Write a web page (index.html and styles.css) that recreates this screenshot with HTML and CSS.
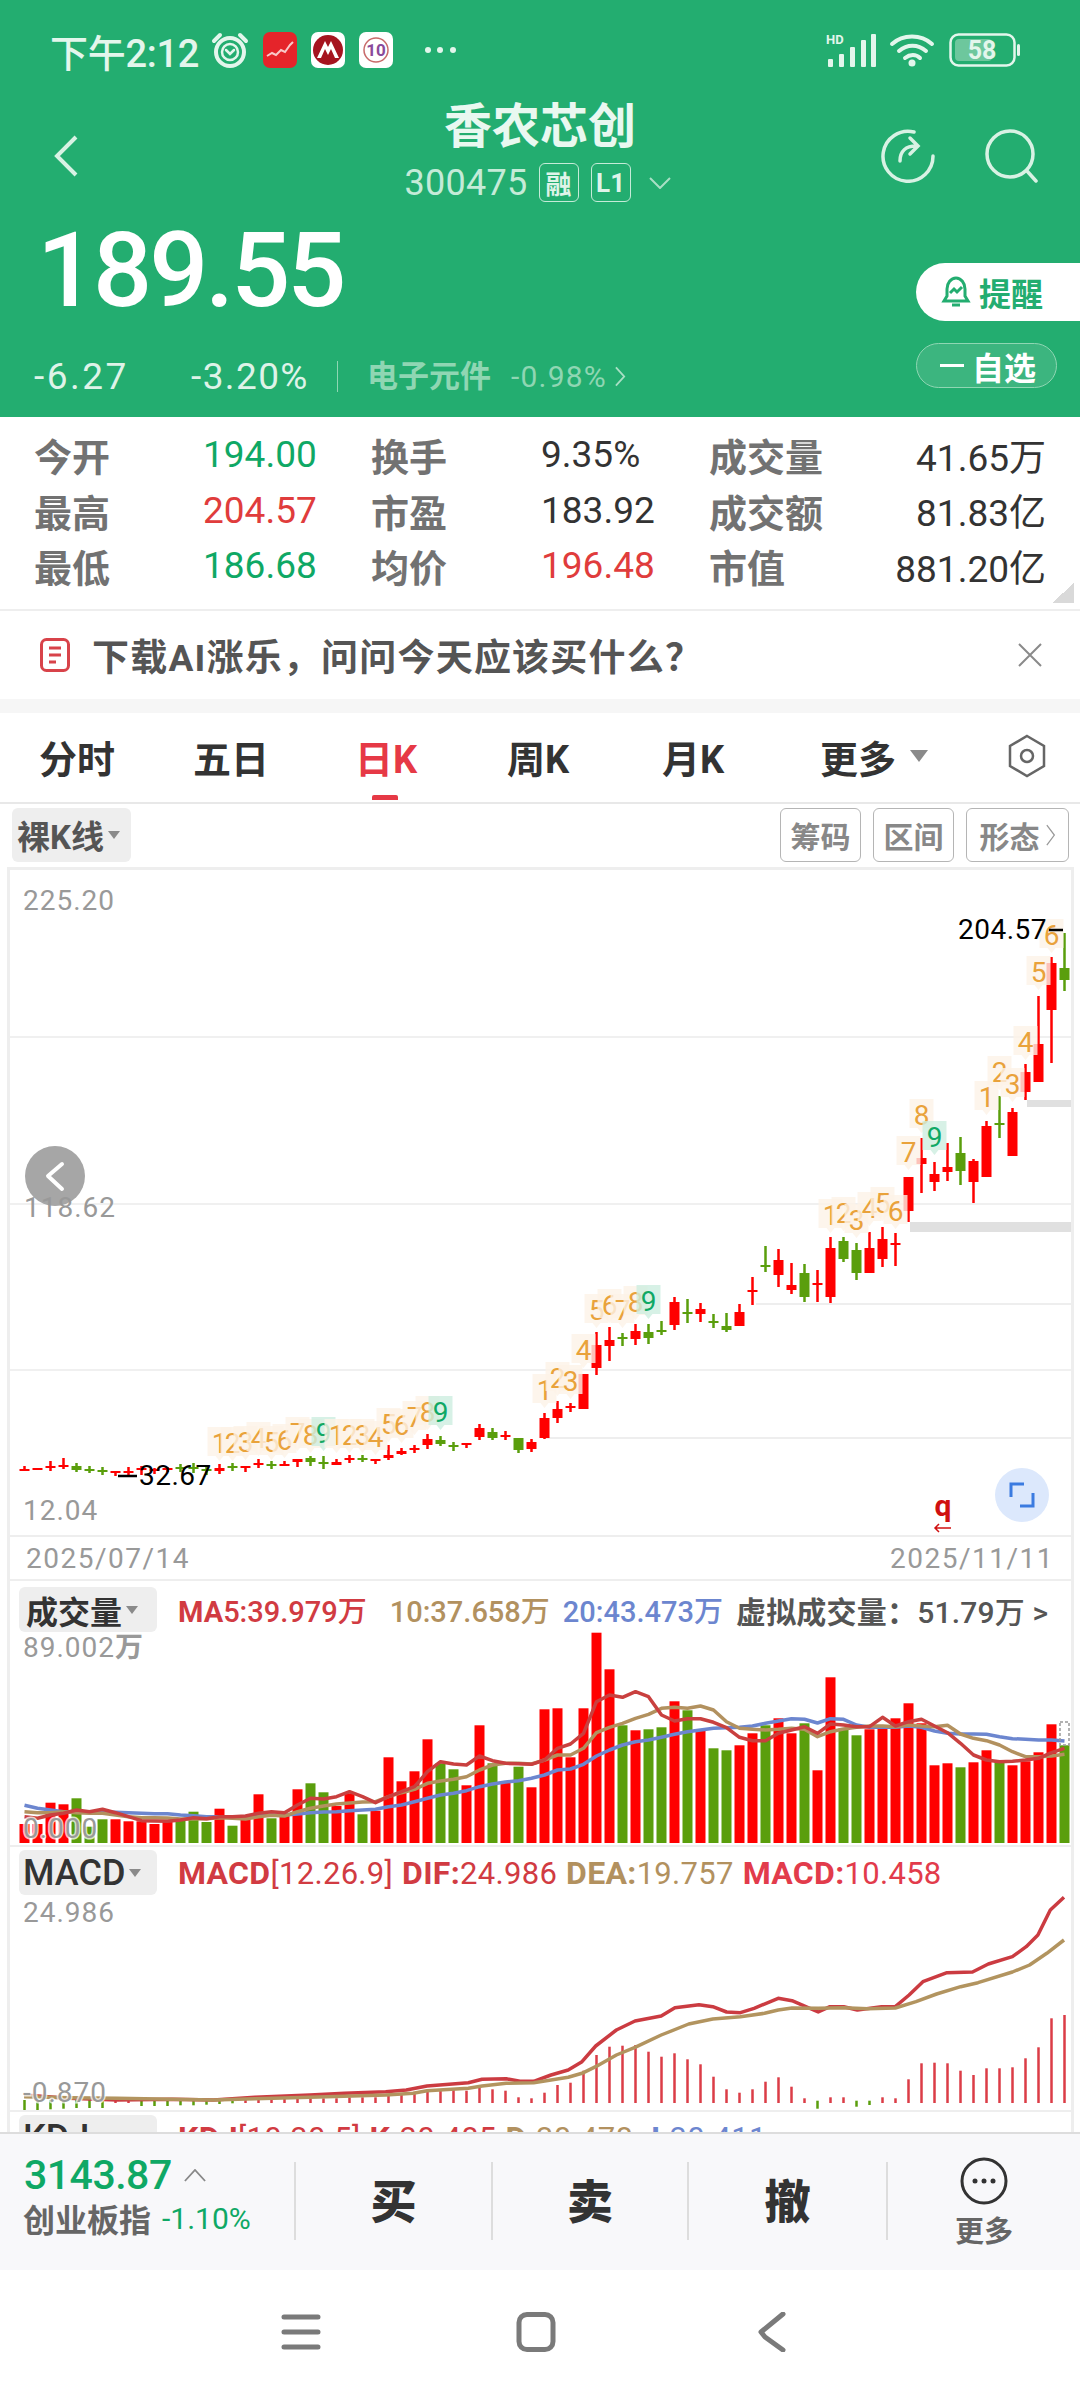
FILE: index.html
```html
<!DOCTYPE html>
<html lang="zh">
<head>
<meta charset="utf-8">
<title>香农芯创</title>
<link rel="stylesheet" href="styles.css">
</head>
<body>
<div class="page">
  <header class="hero">
    <div class="status">
      <span class="clock">下午2:12</span>
      <svg class="ic-alarm" viewBox="0 0 38 36"><circle cx="19" cy="20" r="14" class="st"/><circle cx="19" cy="20" r="8" class="st-thin"/><path d="M15 18l4 4 4-4" class="st-thin"/><path d="M3 9L9 3M35 9L29 3" class="st"/></svg>
      <svg class="ic-app" viewBox="0 0 34 36"><rect width="34" height="36" rx="7" fill="#e5242a"/><path d="M4 24l5-3 4 2 5-5 4 2 5-7 3-3" fill="none" stroke="#f9c9c9" stroke-width="2"/></svg>
      <svg class="ic-app" viewBox="0 0 34 36"><rect width="34" height="36" rx="7" fill="#fff"/><circle cx="17" cy="18" r="15" fill="#a5141f"/><path d="M6 26L14 9l3 6 3-6 8 17h-4l-4-9-3 6-3-6-4 9z" fill="#fff"/></svg>
      <svg class="ic-app" viewBox="0 0 34 36"><rect width="34" height="36" rx="7" fill="#fff"/><circle cx="17" cy="18" r="12" fill="none" stroke="#c86a6a" stroke-width="1.5"/><text x="17" y="24" class="mini">10</text></svg>
      <svg class="ic-dots" viewBox="0 0 33 8"><circle cx="4" cy="4" r="3"/><circle cx="16" cy="4" r="3"/><circle cx="29" cy="4" r="3"/></svg>
      <div class="status-right">
        <svg class="ic-signal" viewBox="0 0 50 34"><text x="0" y="11" class="hd">HD</text><rect x="2" y="26" width="5" height="8" rx="1"/><rect x="13" y="21" width="5" height="13" rx="1"/><rect x="24" y="14" width="5" height="20" rx="1"/><rect x="35" y="7" width="5" height="27" rx="1"/><rect x="45" y="1" width="5" height="33" rx="1"/></svg>
        <svg class="ic-wifi" viewBox="0 0 47 34"><path d="M3 11c11-10 29-10 40 0M10 18c8-7 19-7 27 0M16 25c5-4 11-4 15 0" class="st"/><circle cx="23" cy="30" r="3.5" fill="#e3f6ec"/></svg>
        <svg class="ic-batt" viewBox="0 0 72 34"><rect x="1.5" y="1.5" width="64" height="31" rx="8" class="st-thin"/><rect x="6" y="6" width="37" height="22" rx="4" fill="#6dc79d"/><rect x="68" y="11" width="3" height="12" rx="1.5" fill="#e3f6ec"/><text x="33" y="26" class="batt">58</text></svg>
      </div>
    </div>

    <div class="titlebar">
      <svg class="ic-back" viewBox="0 0 24 42"><path d="M22 2L3 21l19 19"/></svg>
      <div class="title-stack">
        <h1 class="name">香农芯创</h1>
        <div class="code-row">
          <span class="code">300475</span>
          <span class="tag">融</span>
          <span class="tag">L1</span>
          <svg class="ic-down" viewBox="0 0 22 12"><path d="M1 1l10 10L21 1"/></svg>
        </div>
      </div>
      <div class="title-icons">
        <svg class="ic-top" viewBox="0 0 54 54"><path d="M33 3A25 25 0 1 0 52 27" class="hero-line"/><path d="M19 32c0-10 6-15 16-15M29 9l8 8-8 8" class="hero-line"/></svg>
        <svg class="ic-top" viewBox="0 0 54 54"><circle cx="26" cy="25" r="23" class="hero-line"/><path d="M43 42l9 10" class="hero-line"/></svg>
      </div>
    </div>

    <div class="quote">
      <div class="quote-main">
        <div class="price">189.55</div>
        <div class="change">
          <span class="chg-a">-6.27</span>
          <span class="chg-b">-3.20%</span>
          <span class="sector">电子元件</span>
          <span class="sector-pct">-0.98%</span>
          <svg class="ic-more" viewBox="0 0 12 22"><path d="M1 1l9 10-9 10"/></svg>
        </div>
      </div>
      <div class="quote-side">
        <div class="remind">
          <svg class="ic-bell" viewBox="0 0 32 32"><path d="M4 25h24l-3-5v-7c0-6-4-11-9-11S7 7 7 13v7z" class="bell"/><path d="M10 17l4-4 3 3 5-5" class="bell"/><path d="M12 29h8" class="bell"/></svg>
          <span>提醒</span>
        </div>
        <div class="watch"><i class="minus"></i><span>自选</span></div>
      </div>
    </div>
  </header>

  <section class="stats">
    <span class="lab">今开</span><span class="val down">194.00</span><span class="lab">换手</span><span class="val">9.35%</span><span class="lab">成交量</span><span class="val end">41.65万</span>
    <span class="lab">最高</span><span class="val up">204.57</span><span class="lab">市盈</span><span class="val">183.92</span><span class="lab">成交额</span><span class="val end">81.83亿</span>
    <span class="lab">最低</span><span class="val down">186.68</span><span class="lab">均价</span><span class="val up">196.48</span><span class="lab">市值</span><span class="val end">881.20亿</span>
    <i class="corner"></i>
  </section>

  <section class="notice">
    <svg class="ic-doc" viewBox="0 0 30 34"><rect x="1.5" y="1.5" width="27" height="31" rx="5"/><path d="M9 10h12M9 17h12M9 24h7"/></svg>
    <span class="notice-text">下载AI涨乐，问问今天应该买什么？</span>
    <svg class="ic-close" viewBox="0 0 24 24"><path d="M1 1l22 22M23 1L1 23"/></svg>
  </section>

  <nav class="tabs">
    <span class="tab">分时</span>
    <span class="tab">五日</span>
    <span class="tab active">日K</span>
    <span class="tab">周K</span>
    <span class="tab">月K</span>
    <span class="tab">更多<i class="tri"></i></span>
    <svg class="ic-hex" viewBox="0 0 40 44"><path d="M20 2l17 10v20L20 42 3 32V12z"/><circle cx="20" cy="22" r="6"/></svg>
  </nav>

  <div class="toolbar">
    <span class="chip chip-k">裸K线<i class="tri small"></i></span>
    <div class="tools">
      <span class="tool t-a">筹码</span>
      <span class="tool t-a">区间</span>
      <span class="tool t-b">形态<svg class="ic-tool" viewBox="0 0 12 26"><path d="M1 1l9 12-9 12"/></svg></span>
    </div>
  </div>

  <div class="charts">
    <div class="kline">
      <svg id="kline" class="plot" width="1061" height="667" viewBox="10 870 1061 667">
        <g id="kline-g"></g>
        <circle cx="55" cy="1176" r="30" fill="#a6a6a6"/>
        <path d="M62 1164l-14 12 14 13" class="white-chev"/>
        <circle cx="1022" cy="1495" r="27" fill="#dce8fc"/>
        <path d="M1011 1497v-13h13M1033 1493v13h-13" class="blue-corner"/>
        <text x="23" y="910" class="axis">225.20</text>
        <text x="24" y="1217" class="axis">118.62</text>
        <text x="23" y="1520" class="axis">12.04</text>
        <text x="958" y="939" class="mark">204.57</text>
        <path d="M1049 930h14M118 1476h19" class="mark-line"/>
        <text x="139" y="1485" class="mark">32.67</text>
        <text x="943" y="1516" class="red-q">q</text>
        <path d="M951 1528h-16m4-4l-4 4 4 4" class="red-arrow"/>
      </svg>
    </div>
    <div class="dates"><span>2025/07/14</span><span>2025/11/11</span></div>

    <div class="panel">
      <div class="panel-head">
        <span class="chip chip-p">成交量<i class="tri small"></i></span>
        <div class="legend">
          <span class="c-red ma5"><b>MA</b>5:39.979万</span>
          <span class="c-tan">10:37.658万</span>
          <span class="c-blue">20:43.473万</span>
          <span class="c-gray virt"><b>虚拟成交量：</b>51.79万 &gt;</span>
        </div>
      </div>
      <svg id="vol" class="plot" width="1061" height="213" viewBox="10 1632 1061 213">
        <g id="vol-g"></g>
        <text x="23" y="1657" class="axis">89.002<tspan class="cjk">万</tspan></text>
        <text x="23" y="1838" class="axis halo">0.000</text>
      </svg>
    </div>

    <div class="panel lined">
      <div class="panel-head">
        <span class="chip chip-p chip-latin">MACD<i class="tri small"></i></span>
        <div class="legend legend-macd">
          <span class="c-red"><b>MACD</b>[12.26.9]</span>
          <span class="c-red"><b>DIF:</b>24.986</span>
          <span class="c-tan"><b>DEA:</b>19.757</span>
          <span class="c-crim"><b>MACD:</b>10.458</span>
        </div>
      </div>
      <svg id="macd" class="plot" width="1061" height="213" viewBox="10 1895 1061 213">
        <g id="macd-g"></g>
        <text x="23" y="1922" class="axis">24.986</text>
        <text x="23" y="2102" class="axis halo">-0.870</text>
      </svg>
    </div>

    <div class="panel lined">
      <div class="panel-head">
        <span class="chip chip-p chip-latin">KDJ<i class="tri small"></i></span>
        <div class="legend legend-macd">
          <span class="c-red"><b>KDJ</b>[10.30.5]</span>
          <span class="c-red"><b>K:</b>30.485</span>
          <span class="c-tan"><b>D:</b>30.478</span>
          <span class="c-blue"><b>J:</b>30.411</span>
        </div>
      </div>
    </div>
  </div>

  <footer class="trade">
    <div class="ticker">
      <div class="idx"><span>3143.87</span><svg class="ic-caret" viewBox="0 0 24 14"><path d="M1 13L12 1l11 12"/></svg></div>
      <div class="idx-sub"><span class="idx-name">创业板指</span><span class="idx-pct">-1.10%</span></div>
    </div>
    <div class="act">买</div>
    <div class="act">卖</div>
    <div class="act">撤</div>
    <div class="act act-more">
      <svg class="ic-ell" viewBox="0 0 48 48"><circle cx="24" cy="24" r="22"/><circle cx="15" cy="24" r="2.5" class="dot"/><circle cx="24" cy="24" r="2.5" class="dot"/><circle cx="33" cy="24" r="2.5" class="dot"/></svg>
      <span>更多</span>
    </div>
  </footer>

  <div class="sysnav">
    <svg viewBox="0 0 40 40" class="nav-ic"><path d="M3 5h34M3 20h34M3 35h34"/></svg>
    <svg viewBox="0 0 40 40" class="nav-ic"><rect x="3" y="2.500" width="34" height="35" rx="8"/></svg>
    <svg viewBox="0 0 40 40" class="nav-ic"><path d="M32 2L10 20l4 5 18 13"/></svg>
  </div>
</div>
<script src="chart.js"></script>
</body>
</html>
```

FILE: styles.css
```css
* { box-sizing: border-box; }
html, body { margin: 0; padding: 0; background: #fff; }
body { font-family: Roboto, "Noto Sans CJK SC", sans-serif; color: #333; }
i { font-style: normal; display: block; }
svg { display: block; flex: none; }

.page { width: 1080px; height: 2400px; display: flex; flex-direction: column; overflow: hidden; }

/* header */
.hero { height: 417px; background: #23ad70; color: #fff; flex: none; }
.status { height: 100px; display: flex; align-items: center; gap: 14px; padding: 0 59px 0 50px; color: #e3f6ec; }
.clock { font-size: 38px; font-weight: 500; width: 147px; white-space: nowrap; letter-spacing: -.3px; }
.ic-alarm { width: 38px; height: 36px; }
.ic-app { width: 34px; height: 36px; }
.ic-dots { width: 33px; height: 8px; margin-left: 17px; fill: #e3f6ec; }
.st { fill: none; stroke: #e3f6ec; stroke-width: 4; stroke-linecap: round; }
.st-thin { fill: none; stroke: #e3f6ec; stroke-width: 2.500; stroke-linecap: round; }
.mini { font: 700 17px Roboto, sans-serif; fill: #8a4a9a; text-anchor: middle; }
.status-right { margin-left: auto; display: flex; align-items: center; gap: 13px; fill: #e3f6ec; }
.ic-signal { width: 50px; height: 34px; }
.hd { font: 700 13px Roboto, sans-serif; fill: #e3f6ec; }
.ic-wifi { width: 47px; height: 34px; }
.ic-batt { width: 72px; height: 34px; }
.batt { font: 700 25px Roboto, sans-serif; fill: #e3f6ec; text-anchor: middle; }

.titlebar { height: 105px; display: grid; grid-template-columns: 1fr auto 1fr; align-items: center; padding: 0 54px; }
.ic-back { width: 24px; height: 42px; margin-top: 6px; fill: none; stroke: #d8f2e4; stroke-width: 4; }
.title-stack { display: flex; flex-direction: column; align-items: center; }
.name { margin: 0; font-size: 48px; line-height: 48px; font-weight: 700; color: #e9f8f0; }
.code-row { display: flex; align-items: center; margin-top: 12px; height: 40px; margin-right: 5px; }
.code { font-size: 36px; color: #c5ebd8; letter-spacing: .3px; margin-right: 11px; }
.tag { width: 40px; height: 39px; border: 1.500px solid #c5ebd8; border-radius: 6px; color: #dff4e9; font-size: 26px; font-weight: 700; display: flex; align-items: center; justify-content: center; margin-right: 12px; }
.ic-down { width: 22px; height: 12px; margin-left: 6px; fill: none; stroke: #a9dfc5; stroke-width: 2; }
.title-icons { display: flex; justify-content: flex-end; gap: 49px; margin: 6px -12px 0 0; }
.ic-top { width: 54px; height: 54px; }
.hero-line { fill: none; stroke: #d8f2e4; stroke-width: 3.500; stroke-linecap: round; }

.quote { height: 212px; display: flex; justify-content: space-between; }
.quote-main { padding-left: 34px; }
.price { margin-top: 16px; margin-left: 3px; height: 100px; line-height: 100px; font-size: 104px; font-weight: 500; letter-spacing: -3px; color: #fff; }
.change { display: flex; align-items: center; margin-top: 35px; height: 40px; white-space: nowrap; color: #def3e8; font-size: 37px; letter-spacing: 1.400px; }
.chg-a { width: 157px; letter-spacing: 2.500px; }
.chg-b { width: 146px; }
.sector { font-size: 31px; font-weight: 700; color: #8fd6b3; padding-left: 29px; border-left: 1.500px solid #8fd6b3; height: 31px; line-height: 31px; letter-spacing: 0; }
.sector-pct { font-size: 30px; color: #8fd6b3; margin-left: 20px; letter-spacing: 1.200px; }
.ic-more { width: 11px; height: 21px; margin-left: 8px; fill: none; stroke: #a9dfc5; stroke-width: 2; }

.quote-side { width: 164px; padding-top: 58px; }
.remind { height: 58px; background: #fff; border-radius: 29px 0 0 29px; display: flex; align-items: center; padding-left: 24px; color: #23ad70; font-size: 32px; font-weight: 700; gap: 7px; }
.ic-bell { width: 32px; height: 32px; }
.bell { fill: none; stroke: #23ad70; stroke-width: 3; }
.watch { width: 141px; height: 45px; margin-top: 22px; border: 1.500px solid #8fd6b3; border-radius: 23px; background: #3cb57f; display: flex; align-items: center; padding-left: 23px; color: #fff; font-size: 32px; font-weight: 700; gap: 8px; }
.minus { width: 24px; height: 3px; background: #fff; }

/* stats */
.stats { position: relative; flex: none; height: 194px; padding: 10px 0 0 34px; display: grid; grid-template-columns: 169px 168px 170px 168px 170px 167px; grid-auto-rows: 55.500px; align-items: center; border-bottom: 2px solid #eeeeee; white-space: nowrap; }
.lab { font-size: 38px; font-weight: 700; color: #727272; }
.val { font-size: 37px; color: #333; }
.val.end { text-align: right; }
.val.up { color: #e03c3c; }
.val.down { color: #0fa865; }
.corner { position: absolute; right: 6px; bottom: 6px; width: 22px; height: 20px; background: linear-gradient(to bottom right, transparent 50%, #d9d9d9 50%); }

/* notice */
.notice { flex: none; height: 102px; display: flex; align-items: center; padding: 0 38px 0 40px; border-bottom: 14px solid #f6f6f6; }
.ic-doc { width: 30px; height: 34px; fill: none; stroke: #d8434a; stroke-width: 3; }
.notice-text { margin-left: 22px; font-size: 37px; font-weight: 700; color: #555; white-space: nowrap; letter-spacing: 1.200px; }
.ic-close { width: 24px; height: 24px; margin-left: auto; fill: none; stroke: #8a8a8a; stroke-width: 2; }

/* tabs */
.tabs { flex: none; height: 91px; display: grid; grid-template-columns: 154px 162px 152px 155px 158px 187px 1fr; align-items: center; padding: 0 0 3px 39px; border-bottom: 2px solid #e8e8e8; }
.tab { position: relative; font-size: 38px; font-weight: 700; color: #333; white-space: nowrap; display: flex; align-items: center; }
.tab.active { color: #e63946; }
.tab.active::after { content: ""; position: absolute; left: 17px; top: 66px; width: 26px; height: 5px; border-radius: 2px 2px 0 0; background: #e63946; }
.tri { width: 0; height: 0; border-left: 9px solid transparent; border-right: 9px solid transparent; border-top: 12px solid #8a8a8a; margin-left: 14px; }
.tri.small { border-left-width: 6px; border-right-width: 6px; border-top-width: 8px; margin-left: 4px; }
.ic-hex { width: 40px; height: 44px; fill: none; stroke: #666; stroke-width: 2.500; }

/* toolbar */
.toolbar { flex: none; height: 63px; display: flex; align-items: flex-start; justify-content: space-between; padding: 4px 11px 0 12px; }
.chip { display: flex; align-items: center; background: #eeeeee; border-radius: 6px; color: #333; font-weight: 700; white-space: nowrap; }
.chip-k { width: 119px; height: 54px; font-size: 33px; padding-left: 5px; color: #555; }
.tools { display: flex; gap: 12px; }
.tool { height: 54px; border: 1.500px solid #b5b5b5; border-radius: 6px; color: #888; font-size: 30px; font-weight: 700; display: flex; align-items: center; justify-content: center; gap: 6px; }
.t-a { width: 81px; }
.t-b { width: 103px; }
.ic-tool { width: 10px; height: 24px; fill: none; stroke: #999; stroke-width: 1.500; }

/* charts */
.charts { flex: none; width: 1067px; height: 1265px; margin-left: 7px; border: 3px solid #eeeeee; border-bottom: 0; overflow: hidden; }
.kline { height: 667px; }
.plot { overflow: visible; }
.dates { height: 44px; display: flex; align-items: center; justify-content: space-between; padding: 0 17px 0 16px; border-bottom: 2px solid #eeeeee; font-size: 28px; color: #999; letter-spacing: 1.500px; }
.panel { height: 264px; padding-top: 6px; }
.panel.lined { height: 265px; border-top: 2px solid #eeeeee; padding-top: 3px; }
.panel-head { height: 45px; display: flex; align-items: center; padding-left: 9px; }
.chip-p { width: 138px; height: 45px; font-size: 32px; padding-left: 7px; }
.chip-latin { font-size: 36px; font-weight: 500; padding-left: 4px; }
.legend { margin-left: 21px; display: flex; gap: 13px; font-size: 29px; white-space: nowrap; font-weight: 500; }
.ma5 { margin-right: 10px; }
.virt { font-size: 30px; letter-spacing: .2px; }
.legend-macd { gap: 9px; font-size: 31px; letter-spacing: .3px; font-weight: 400; }
.legend-macd b { font-size: 32px; }
.legend b { font-weight: 700; }
.c-red { color: #d13b42; }
.c-tan { color: #b2915f; }
.c-blue { color: #6c86cf; }
.c-crim { color: #e23b4b; }
.c-gray { color: #555; }

.axis { font: 28px Roboto, "Noto Sans CJK SC", sans-serif; fill: #999; letter-spacing: 1px; }
.cjk { font-weight: 700; }
.halo { paint-order: stroke; stroke: rgba(255,255,255,.75); stroke-width: 3px; fill: #999; }
.mark { font: 28px Roboto, sans-serif; fill: #000; letter-spacing: .5px; }
.mark-line { stroke: #000; stroke-width: 2.500; fill: none; }
.red-q { font: 700 30px Roboto, sans-serif; fill: #d01010; text-anchor: middle; }
.red-arrow { fill: none; stroke: #d01010; stroke-width: 1.500; }
.white-chev { fill: none; stroke: #fff; stroke-width: 4; stroke-linecap: round; stroke-linejoin: round; }
.blue-corner { fill: none; stroke: #3b7be0; stroke-width: 3; }
.tag-num { font: 28px Roboto, sans-serif; fill: #e9a23b; text-anchor: middle; }
.tag-num.nine { fill: #0fa865; }

/* trade bar */
.trade { flex: none; height: 138px; background: #f8f8fa; border-top: 2px solid #dddddd; display: grid; grid-template-columns: 294px 197px 196px 199px 1fr; padding-top: 28px; align-items: start; }
.ticker { padding-left: 24px; }
.idx { height: 40px; margin-top: -7px; display: flex; align-items: center; color: #0fa865; font-size: 41px; font-weight: 500; letter-spacing: -.5px; }
.ic-caret { width: 22px; height: 13px; margin-left: 12px; fill: none; stroke: #888; stroke-width: 2; }
.idx-sub { height: 40px; margin-top: 3px; display: flex; align-items: center; white-space: nowrap; }
.idx-name { font-size: 32px; font-weight: 700; color: #666; margin-left: -1px; }
.idx-pct { font-size: 30px; color: #0fa865; margin-left: 11px; }
.act { height: 78px; border-left: 2px solid #dddddd; display: flex; align-items: center; justify-content: center; font-size: 46px; font-weight: 900; color: #333; padding-bottom: 6px; }
.act-more { flex-direction: column; justify-content: flex-start; font-size: 29px; font-weight: 700; color: #666; gap: 3px; padding-bottom: 0; }
.ic-ell { width: 48px; height: 48px; margin-top: -5px; fill: none; stroke: #333; stroke-width: 3; }
.dot { fill: #333; stroke: none; }

/* system nav */
.sysnav { flex: 1; display: flex; align-items: center; justify-content: center; gap: 195px; padding: 0 8px 6px 0; }
.nav-ic { width: 40px; height: 40px; fill: none; stroke: #7a7a7a; stroke-width: 5; stroke-linecap: round; stroke-linejoin: round; }
```

FILE: chart.js
```js
(function () {
  var RED = '#ff0000', GREEN = '#5a9e0c';
  function X(i) { return 24.5 + 13 * i; }
  function rect(x, y, w, h, f) { return '<rect x="' + x + '" y="' + y + '" width="' + w + '" height="' + h + '" fill="' + f + '"/>'; }
  function poly(pts, c) { return '<polyline fill="none" stroke="' + c + '" stroke-width="3.5" stroke-linejoin="round" points="' + pts.join(' ') + '"/>'; }

  /* candles: colour, body top, body bottom, wick top, wick bottom */
  var K = [
    'r1469,1471,1466,1471','r1468,1470,1468,1470','r1466,1468,1461,1471','r1465,1467,1458,1469','g1466,1470,1463,1472',
    'g1469,1471,1466,1473','g1470,1472,1467,1475','r1471,1473,1471,1476','r1471,1473,1467,1476','r1468,1470,1466,1475',
    'r1469,1471,1468,1474','r1468,1470,1467,1472','g1467,1469,1464,1472','g1467,1469,1463,1473','g1469,1471,1466,1475',
    'r1468,1471,1464,1474','g1466,1468,1463,1471','r1466,1468,1466,1472','r1463,1465,1459,1468','g1464,1466,1461,1469',
    'r1464,1466,1461,1466','r1459,1462,1459,1467','g1458,1462,1456,1466','g1462,1464,1456,1469','r1462,1465,1459,1465',
    'r1458,1460,1455,1463','g1458,1460,1455,1462','r1459,1461,1459,1464','r1455,1458,1445,1460','r1451,1454,1448,1455',
    'r1448,1450,1445,1453','r1439,1445,1434,1449','g1440,1444,1436,1446','g1445,1447,1442,1451','r1443,1445,1443,1448',
    'r1428,1437,1424,1440','g1432,1438,1428,1440','r1435,1437,1431,1440','g1438,1450,1438,1453','r1442,1449,1439,1452',
    'r1418,1438,1413,1439','r1409,1418,1401,1423','r1406,1408,1403,1412','r1374,1409,1374,1409','r1345,1368,1332,1375',
    'r1340,1346,1327,1361','g1337,1339,1333,1346','r1331,1339,1324,1345','g1332,1338,1324,1344','g1330,1332,1321,1335',
    'r1302,1325,1297,1330','g1312,1314,1299,1323','r1309,1314,1303,1322','g1321,1323,1314,1328','g1326,1330,1313,1332',
    'r1312,1326,1304,1326','r1290,1292,1277,1305','g1265,1267,1246,1272','r1260,1275,1249,1287','r1285,1290,1263,1294',
    'g1273,1297,1264,1302','r1283,1285,1270,1302','r1248,1297,1237,1303','g1241,1259,1237,1262','g1250,1273,1243,1280',
    'r1248,1273,1232,1273','r1239,1259,1227,1267','r1243,1244,1233,1266','r1177,1211,1177,1222','r1158,1164,1138,1193',
    'r1174,1182,1162,1191','r1167,1172,1143,1181','g1153,1171,1137,1185','r1161,1182,1159,1203','r1126,1177,1121,1177',
    'g1123,1124,1096,1138','r1112,1156,1108,1156','r1072,1092,1064,1100','r1044,1082,996,1082','r963,1010,957,1063',
    'g968,980,933,991'
  ];
  /* markers: candle index, digit, centre y */
  var M = [
    [15,1,1443],[16,2,1443],[17,3,1442],[18,4,1438],[19,5,1442],[20,6,1440],[21,7,1433],[22,8,1435],[23,9,1433],
    [24,1,1435],[25,2,1435],[26,3,1435],[27,4,1437],[28,5,1424],[29,6,1425],[30,7,1417],[31,8,1412],[32,9,1412],
    [40,1,1390],[41,2,1378],[42,3,1381],[43,4,1350],[44,5,1310],[45,6,1305],[46,7,1310],[47,8,1302],[48,9,1301],
    [62,1,1215],[63,2,1213],[64,3,1220],[65,4,1208],[66,5,1203],[67,6,1211],[68,7,1152],[69,8,1115],[70,9,1137],
    [74,1,1097],[75,2,1072],[76,3,1084],[77,4,1042],[78,5,972],[79,6,935]
  ];
  var s = '';
  [1037, 1204, 1370].forEach(function (y) { s += rect(10, y - 1, 1061, 2, '#f0f0f0'); });
  s += rect(10, 1535, 1061, 2, '#eeeeee');
  s += rect(545, 1437, 526, 2, '#eeeeee') + rect(756, 1303, 315, 2, '#eeeeee');
  s += rect(910, 1222, 161, 10, '#e0e0e0') + rect(1027, 1100, 44, 7, '#e0e0e0');
  K.forEach(function (k, i) {
    var c = k[0] === 'r' ? RED : GREEN, v = k.slice(1).split(',').map(Number), x = X(i);
    s += rect(x - 1.25, v[2], 2.5, v[3] - v[2], c);
    s += rect(x - 5, v[0], 10, Math.max(v[1] - v[0], 2), c);
  });
  M.forEach(function (m) {
    var x = X(m[0]), y = m[2], nine = m[1] === 9;
    s += '<path opacity="0.8" fill="' + (nine ? '#cdeee0' : '#fdf3e7') + '" d="M' + (x - 12) + ' ' + (y - 16) + 'h24v29h-8l-4 5-4-5h-8z"/>';
    s += '<text x="' + x + '" y="' + (y + 10) + '" class="tag-num' + (nine ? ' nine' : '') + '">' + m[1] + '</text>';
  });
  document.getElementById('kline-g').innerHTML = s;

  /* volume */
  var VT = [612,612,548,553,535,620,598,598,604,604,612,606,600,575,606,566,617,598,523,595,588,508,490,517,558,520,583,572,412,484,454,358,430,448,496,316,430,487,440,502,
    268,265,412,265,38,148,316,331,328,322,244,271,331,385,391,376,340,316,295,340,310,451,172,325,346,328,325,295,250,310,436,430,442,427,391,420,436,424,397,313,376];
  var VC = 'rrrrgggrrrrrgggrgrrgrrggrrgrrrrrggrrgrgr' + 'rrrrrrgrggrgrggrrgrrgrrggrrrrrrrgrrgrrrrg';
  var MA5 = [590,595,585,580,570,575,568,578,590,602,603,604,600,593,596,590,590,588,580,575,578,555,535,537,530,515,530,548,530,515,500,455,425,432,435,408,422,430,431,433,
    420,385,372,340,245,225,232,215,230,285,303,296,296,307,323,352,362,362,340,330,320,340,312,315,320,320,292,318,305,298,318,338,370,405,420,425,424,420,415,398,385];
  var MA10 = [575,578,578,575,578,580,580,585,590,593,593,594,597,597,596,593,595,597,590,586,588,575,565,558,552,549,546,545,530,518,508,490,483,478,470,450,435,430,430,432,
    420,405,405,385,338,322,310,295,283,265,262,265,258,270,305,325,328,330,328,325,328,350,335,327,322,318,318,320,315,318,320,316,342,355,362,375,395,410,410,408,403];
  var MA20 = [556,565,570,575,575,576,577,577,578,580,581,581,585,587,590,590,590,590,585,585,585,582,578,576,575,572,570,568,560,555,545,535,525,520,512,500,492,486,482,475,
    465,450,447,433,408,390,375,365,360,352,343,335,330,325,323,322,318,310,303,296,298,309,296,298,315,322,322,322,318,322,333,340,342,342,343,350,356,358,360,360,363];
  function vy(z) { return +(1620 + z / 3).toFixed(1); }
  function vline(a, c) { return poly(a.map(function (z, i) { return X(i) + ',' + vy(z); }), c); }
  s = '';
  VT.forEach(function (z, i) {
    var y = vy(z);
    s += rect(X(i) - 5, y, 10, 1843 - y, VC[i] === 'r' ? RED : GREEN);
  });
  s += vline(MA20, '#6c86cf') + vline(MA10, '#b2915f') + vline(MA5, '#c9403f');
  s += '<rect x="1060" y="1722" width="9" height="23" fill="none" stroke="#999" stroke-width="1.5" stroke-dasharray="3 2"/>';
  document.getElementById('vol-g').innerHTML = s;

  /* MACD */
  function my(z) { return +(1840 + z / 3).toFixed(1); }
  var MB = {17:780,18:778,19:778,20:775,21:775,22:775,23:775,24:775,25:772,26:772,27:772,28:768,29:765,30:760,31:755,32:750,33:750,34:752,35:742,36:748,37:752,38:772,39:775,40:758,41:735,42:728,43:692,44:645,45:620,46:617,47:615,48:635,49:650,50:640,51:658,52:673,53:710,54:748,55:758,56:748,57:725,58:712,59:740,60:775,62:772,63:772,66:772,67:775,68:718,69:670,70:668,71:670,72:692,73:705,74:685,75:685,76:682,77:655,78:622,79:535,80:525,7:782,8:782};
  var MG = {0:[780,810],1:[780,810],2:[780,808],3:[780,806],4:[780,804],5:[780,804],6:[780,804],9:[782,798],10:[782,798],11:[782,798],12:[782,796],13:[782,796],14:[782,794],15:[782,792],16:[782,790],61:[782,806],64:[782,800],65:[782,795]};
  s = '';
  Object.keys(MB).forEach(function (i) { var y = my(MB[i]); s += rect(X(+i) - 1.25, y, 2.5, 2103 - y, '#db3d47'); });
  Object.keys(MG).forEach(function (i) { var a = my(MG[i][0]), b = my(MG[i][1]); s += rect(X(+i) - 1.25, a, 2.5, b - a, GREEN); });
  var DIF = [35,765,100,775,170,780,250,778,310,780,370,772,450,765,500,760,560,755,590,750,620,738,680,728,700,718,735,716,755,724,775,724,800,705,825,690,845,665,865,618,895,570,922,543,960,528,980,503,1015,494,1035,500,1055,516,1075,518,1095,505,1130,475,1150,482,1170,500,1188,516,1205,500,1225,500,1245,510,1280,500,1300,500,1320,465,1340,425,1375,398,1412,396,1435,372,1470,350,1490,320,1507,285,1525,210,1545,172];
  var DEA = [35,770,100,773,170,775,250,778,310,780,370,776,450,772,560,765,600,760,620,752,680,745,700,738,735,730,775,728,800,720,825,712,845,700,865,680,895,645,922,622,960,585,1000,552,1035,537,1075,530,1110,520,1130,510,1150,504,1188,505,1225,503,1260,506,1300,504,1330,485,1360,462,1395,440,1420,428,1470,396,1495,375,1520,340,1545,300];
  function mline(a, c) { var p = []; for (var i = 0; i < a.length; i += 2) p.push((a[i] / 1.452).toFixed(1) + ',' + my(a[i + 1])); return poly(p, c); }
  s += mline(DIF, '#cb3b41') + mline(DEA, '#b2945f');
  document.getElementById('macd-g').innerHTML = s;
})();
```
